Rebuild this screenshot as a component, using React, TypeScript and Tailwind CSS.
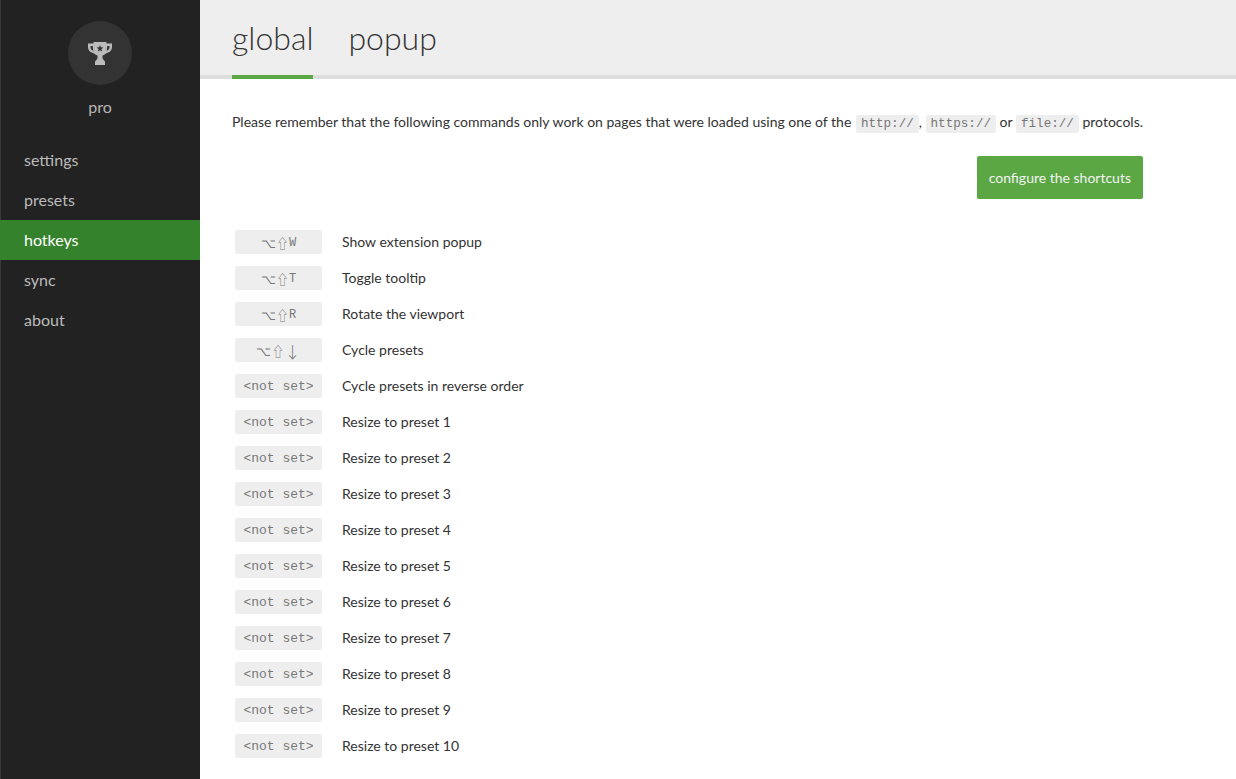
const rows: [string, string, string][] = [
  ["⌥⇧", "W", "Show extension popup"],
  ["⌥⇧", "T", "Toggle tooltip"],
  ["⌥⇧", "R", "Rotate the viewport"],
  ["⌥⇧", "↓", "Cycle presets"],
  ["", "<not set>", "Cycle presets in reverse order"],
  ["", "<not set>", "Resize to preset 1"],
  ["", "<not set>", "Resize to preset 2"],
  ["", "<not set>", "Resize to preset 3"],
  ["", "<not set>", "Resize to preset 4"],
  ["", "<not set>", "Resize to preset 5"],
  ["", "<not set>", "Resize to preset 6"],
  ["", "<not set>", "Resize to preset 7"],
  ["", "<not set>", "Resize to preset 8"],
  ["", "<not set>", "Resize to preset 9"],
  ["", "<not set>", "Resize to preset 10"],
];

const nav = ["settings", "presets", "hotkeys", "sync", "about"];

function Code({ children, first }: { children: string; first?: boolean }) {
  return (
    <code
      className={
        first
          ? "ml-px rounded-[2px] bg-[#eeeeee] px-[5px] py-[2px] font-['Liberation_Mono',monospace] text-[12.6px] text-[#777777]"
          : "rounded-[2px] bg-[#eeeeee] px-[5px] py-[2px] font-['Liberation_Mono',monospace] text-[12.6px] text-[#777777]"
      }
    >
      {children}
    </code>
  );
}

function Trophy() {
  return (
    <svg width="24" height="24" viewBox="0 0 24 24" fill="#bbbbbb">
      <path
        fillRule="evenodd"
        d="M5.500 1h13v1.500H24v3.500c0 3.200-2.500 5.800-6.200 6.400-.8 1-1.900 1.800-3.300 2.200V17c0 1 1.200 2 2.500 3.500V24h-10v-3.500C8.300 19 9.500 18 9.500 17v-2.400c-1.400-.4-2.500-1.200-3.300-2.200C2.500 11.800 0 9.200 0 6V2.500h5.500V1zM2.500 5v1.200c0 1.600 1.200 2.900 3 3.600C5 8.400 4.800 6.800 4.700 5H2.500zm19 0h-2.200c-.1 1.800-.3 3.400-.8 4.800 1.800-.7 3-2 3-3.600V5zM12 4l-.9 2.300-2.500.2 1.900 1.600-.6 2.400 2.100-1.300 2.100 1.300-.6-2.400 1.900-1.600-2.500-.2L12 4z"
      />
    </svg>
  );
}

export default function App() {
  return (
    <div className="flex min-h-[779px] w-full overflow-hidden bg-white font-['Lato',sans-serif] text-[14px] text-[#333333]">
      <aside className="w-[200px] shrink-0 border-l border-[#3a3a3a] bg-[#222222]">
        <div className="-ml-px flex flex-col items-center pt-[21px]">
          <div className="flex h-16 w-16 items-center justify-center rounded-full bg-[#333333]">
            <Trophy />
          </div>
          <div className="mt-[12px] text-[16px] leading-[20px] text-[#b5b5b5]">pro</div>
        </div>
        <nav className="-ml-px mt-[23px] flex flex-col">
          {nav.map((n) => (
            <div
              key={n}
              className={
                n === "hotkeys"
                  ? "h-10 bg-[#35822d] pl-6 text-[16px] leading-10 text-white"
                  : "h-10 pl-6 text-[16px] leading-10 text-[#bbbbbb]"
              }
            >
              {n}
            </div>
          ))}
        </nav>
      </aside>
      <main className="min-w-0 flex-1">
        <header className="flex h-[79px] gap-[35px] border-b-4 border-[#dddddd] bg-[#eeeeee] pl-8">
          <div className="-mb-1 h-[79px] border-b-4 border-[#5aa744] pt-[18px] text-[32px] font-light leading-[40px] text-[#333333]">
            global
          </div>
          <div className="pt-[18px] text-[32px] font-light leading-[40px] text-[#333333]">popup</div>
        </header>
        <div className="pl-8 pr-[93px] pt-[33px]">
          <p className="whitespace-nowrap leading-5">
            Please remember that the following commands only work on pages that were loaded using one of the{" "}
            <Code first>http://</Code>, <Code>https://</Code> or <Code>file://</Code> protocols.
          </p>
          <div className="mt-[22px] flex justify-end">
            <div className="flex h-[43px] items-center rounded-[2px] bg-[#5aa744] px-3 text-[14px] text-[#f3f3f3]">
              configure the shortcuts
            </div>
          </div>
          <div className="mt-[31px] flex flex-col gap-3">
            {rows.map(([sym, k, label], i) => (
              <div key={i} className="flex h-6 items-center">
                <div className="ml-[3px] flex h-6 w-[87px] items-center justify-center rounded-[2px] bg-[#eeeeee] pt-px text-[#777777]">
                  {sym && (
                    <span className="font-['Noto_Sans_CJK_JP','DejaVu_Sans',sans-serif] text-[13px] font-light leading-[22px]">
                      {sym}
                    </span>
                  )}
                  {k === "↓" ? (
                    <span className="font-['Noto_Sans_CJK_JP','DejaVu_Sans',sans-serif] text-[16px] font-light leading-[22px]">
                      {k}
                    </span>
                  ) : (
                    <span
                      className={
                        sym
                          ? "font-['Liberation_Mono',monospace] text-[12px] leading-[22px]"
                          : "font-['Liberation_Mono',monospace] text-[13px] leading-[22px]"
                      }
                    >
                      {k}
                    </span>
                  )}
                </div>
                <div className="ml-5 -translate-y-px">{label}</div>
              </div>
            ))}
          </div>
        </div>
      </main>
    </div>
  );
}
